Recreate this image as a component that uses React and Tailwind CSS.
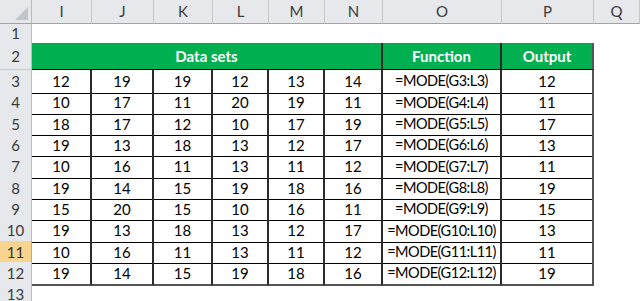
const cols = ["I", "J", "K", "L", "M", "N", "O", "P", "Q"];

const rows = [
  [12, 19, 19, 12, 13, 14, 12],
  [10, 17, 11, 20, 19, 11, 11],
  [18, 17, 12, 10, 17, 19, 17],
  [19, 13, 18, 13, 12, 17, 13],
  [10, 16, 11, 13, 11, 12, 11],
  [19, 14, 15, 19, 18, 16, 19],
  [15, 20, 15, 10, 16, 11, 15],
  [19, 13, 18, 13, 12, 17, 13],
  [10, 16, 11, 13, 11, 12, 11],
  [19, 14, 15, 19, 18, 16, 19],
];

const grid =
  "grid grid-cols-[32px_60px_62px_59px_56px_56px_58px_119px_92px_1fr]";

function RowHead({ children, active }) {
  return (
    <div
      className={`flex items-center justify-center border-b border-r text-[15px] ${
        active
          ? "bg-[#f8d58f] border-b-[#e3b45c] border-r-[#f0a030] text-[#333]"
          : "bg-[#e6e8eb] border-b-[#c8cbd0] border-r-[#b9bcc1] text-[#3b3b3b]"
      }`}
    >
      {children}
    </div>
  );
}

export default function App() {
  return (
    <div
      className="w-[640px] h-[301px] overflow-hidden bg-white flex flex-col text-black"
      style={{ fontFamily: "Lato, 'Liberation Sans', sans-serif" }}
    >
      {/* column letters */}
      <div className={`${grid} h-[22px] shrink-0`}>
        <div className="relative bg-[#e6e8eb] border-r border-b border-r-[#b9bcc1] border-b-[#9fa3a8]">
          <div className="absolute right-[3px] bottom-[3px] w-0 h-0 border-l-[13px] border-l-transparent border-b-[13px] border-b-[#c2c5ca]" />
        </div>
        {cols.map((c) => (
          <div
            key={c}
            className="flex items-center justify-center bg-[#e6e8eb] border-r border-b border-r-[#c3c6cb] border-b-[#9fa3a8] text-[15px] text-[#3b3b3b]"
          >
            {c}
          </div>
        ))}
      </div>

      {/* row 1 */}
      <div className={`${grid} h-[21px] shrink-0`}>
        <RowHead>1</RowHead>
      </div>

      {/* row 2: headings */}
      <div className={`${grid} h-[27px] shrink-0`}>
        <RowHead>2</RowHead>
        <div className="col-span-6 flex items-center justify-center bg-[#00b050] border-r-2 border-b border-r-[#2a2a2a] border-b-black text-white font-bold text-[15px]">
          Data sets
        </div>
        <div className="flex items-center justify-center bg-[#00b050] border-r-2 border-b border-r-[#2a2a2a] border-b-black text-white font-bold text-[15px]">
          Function
        </div>
        <div className="flex items-center justify-center bg-[#00b050] border-r-2 border-b border-r-[#555] border-b-black text-white font-bold text-[15px]">
          Output
        </div>
      </div>

      {/* rows 3-12 */}
      {rows.map((r, i) => {
        const n = i + 3;
        const last = n === 12;
        return (
          <div key={n} className={`${grid} h-[21.33px] shrink-0`}>
            <RowHead active={n === 11}>{n}</RowHead>
            {r.slice(0, 6).map((v, j) => (
              <div
                key={j}
                className={`flex items-center justify-center border-r-2 border-r-[#2a2a2a] text-[15px] ${
                  last ? "border-b-2 border-b-[#555]" : "border-b border-b-black"
                }`}
              >
                {v}
              </div>
            ))}
            <div
              className={`flex items-center justify-center border-r-2 border-r-[#2a2a2a] text-[14.5px] whitespace-nowrap tracking-[-0.5px] ${
                last ? "border-b-2 border-b-[#555]" : "border-b border-b-black"
              }`}
            >
              =MODE(G{n}:L{n})
            </div>
            <div
              className={`flex items-center justify-center border-r-2 border-r-[#555] text-[15px] ${
                last ? "border-b-2 border-b-[#555]" : "border-b border-b-black"
              }`}
            >
              {r[6]}
            </div>
          </div>
        );
      })}

      {/* row 13 */}
      <div className={`${grid} flex-1`}>
        <RowHead>13</RowHead>
      </div>
    </div>
  );
}
